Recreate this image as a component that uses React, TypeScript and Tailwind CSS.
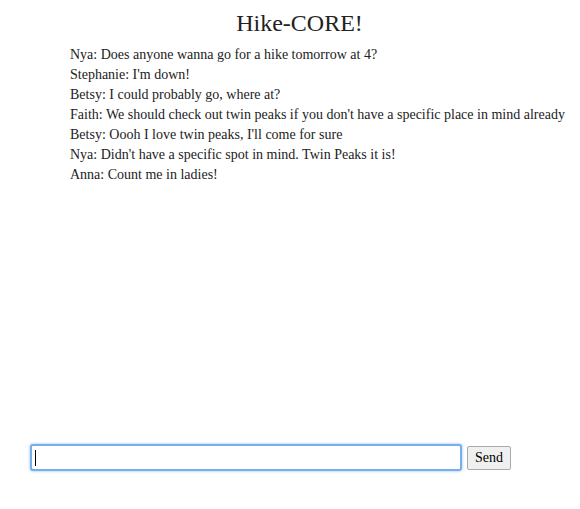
export default function App() {
  const msgs = [
    "Nya: Does anyone wanna go for a hike tomorrow at 4?",
    "Stephanie: I'm down!",
    "Betsy: I could probably go, where at?",
    "Faith: We should check out twin peaks if you don't have a specific place in mind already",
    "Betsy: Oooh I love twin peaks, I'll come for sure",
    "Nya: Didn't have a specific spot in mind. Twin Peaks it is!",
    "Anna: Count me in ladies!",
  ];
  return (
    <div className="w-[580px] h-[509px] bg-white text-[#222] font-['Liberation_Serif',serif] flex flex-col">
      <h1 className="text-[24px] leading-[28px] text-center pl-[19px] mt-[9px] text-[#222]">Hike-CORE!</h1>
      <div className="pl-[70px] mt-[8px] text-[14px] leading-[20px] whitespace-nowrap h-[396px]">
        {msgs.map((m, i) => (
          <div key={i}>{m}</div>
        ))}
      </div>
      <div className="flex items-center pl-[30px] gap-[5px] mt-[3px]">
        <div className="w-[432px] h-[27px] rounded-[3px] border-2 border-[#78aeea] shadow-[0_0_3px_#8cbaf0] bg-white flex items-center pl-[3px]">
          <div className="w-px h-[16px] bg-black" />
        </div>
        <button className="h-[24px] px-[7px] border border-[#aaa] bg-[#f0f0f0] text-[14px] leading-[20px] text-black rounded-[2px] font-['Liberation_Serif',serif]">Send</button>
      </div>
    </div>
  );
}
